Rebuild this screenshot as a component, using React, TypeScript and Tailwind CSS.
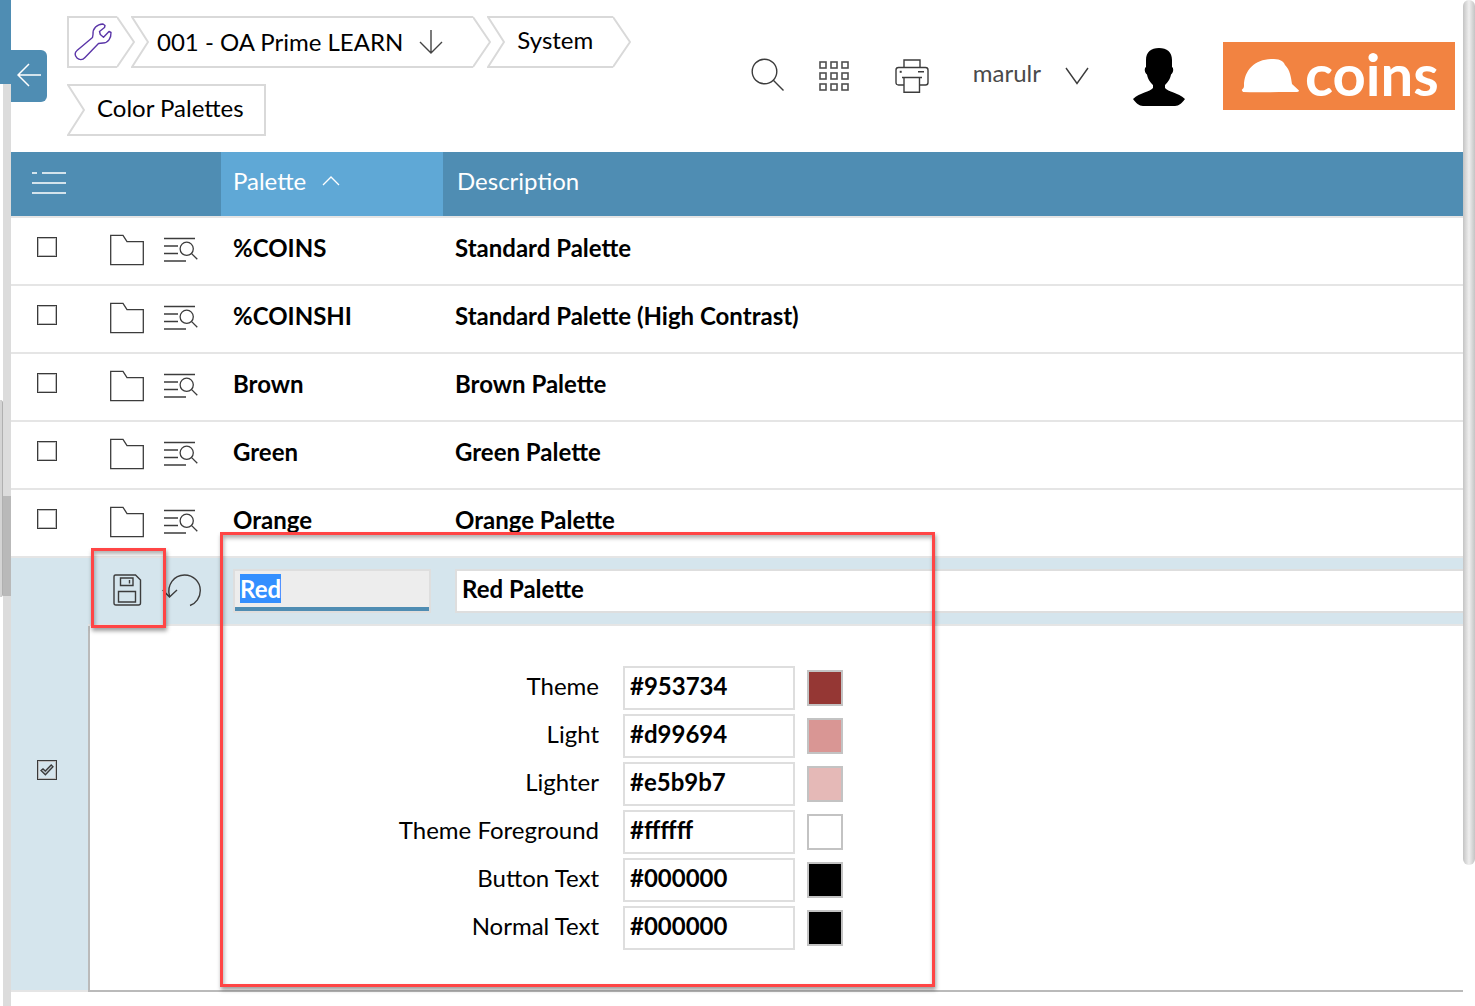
import { useEffect, useRef } from "react";
import type { ReactNode } from "react";

const rows = [
  { code: "%COINS", description: "Standard Palette" },
  { code: "%COINSHI", description: "Standard Palette (High Contrast)" },
  { code: "Brown", description: "Brown Palette" },
  { code: "Green", description: "Green Palette" },
  { code: "Orange", description: "Orange Palette" },
];

const fields = [
  { id: "theme", label: "Theme", value: "#953734", swatch: "bg-[#953734]" },
  { id: "light", label: "Light", value: "#d99694", swatch: "bg-[#d99694]" },
  { id: "lighter", label: "Lighter", value: "#e5b9b7", swatch: "bg-[#e5b9b7]" },
  { id: "foreground", label: "Theme Foreground", value: "#ffffff", swatch: "bg-white" },
  { id: "button-text", label: "Button Text", value: "#000000", swatch: "bg-black" },
  { id: "normal-text", label: "Normal Text", value: "#000000", swatch: "bg-black" },
];

function Crumb({ start, end, children }: { start: "flat" | "notch"; end: "flat" | "tip"; children: ReactNode }) {
  return (
    <li className="-mr-1 flex h-[52px]">
      {start === "notch" && (
        <svg className="h-[52px] w-[18px] shrink-0" viewBox="0 0 18 52" fill="none" stroke="#d9d9d9" strokeWidth="2" aria-hidden="true">
          <path d="M18 1H1L17 26L1 51H18" />
        </svg>
      )}
      <div className={`flex items-center border-y-2 border-[#d9d9d9] ${start === "flat" ? "border-l-2" : ""} ${end === "flat" ? "border-r-2" : ""}`}>
        {children}
      </div>
      {end === "tip" && (
        <svg className="h-[52px] w-[18px] shrink-0" viewBox="0 0 18 52" fill="none" stroke="#d9d9d9" strokeWidth="2" aria-hidden="true">
          <path d="M0 1L17 26L0 51" />
        </svg>
      )}
    </li>
  );
}

function FolderIcon() {
  return (
    <svg width="34" height="32" viewBox="0 0 34 32" fill="none" stroke="#3c3c3c" strokeWidth="1.3" aria-hidden="true">
      <path d="M.7 1.3H13L17 7.6H33.3V30.7H.7Z" />
    </svg>
  );
}

function ListSearchIcon() {
  return (
    <svg width="34" height="32" viewBox="0 0 34 32" fill="none" stroke="#3c3c3c" strokeWidth="1.3" aria-hidden="true">
      <path d="M0 4.5H31M0 12H14M0 19.5H14M0 27H22" />
      <circle cx="22.7" cy="14.8" r="6.6" />
      <path d="M27.4 19.4L33.3 25.3" />
    </svg>
  );
}

function RowCheckbox({ label, checked = false }: { label: string; checked?: boolean }) {
  return (
    <label className="ml-[26px] grid size-5 place-items-center">
      <input type="checkbox" aria-label={label} defaultChecked={checked} className="peer col-start-1 row-start-1 size-5 appearance-none border border-[#3a3a3a] shadow-[inset_0_0_0_1px_#bdbdbd]" />
      <svg className="pointer-events-none invisible col-start-1 row-start-1 peer-checked:visible" width="14" height="12" viewBox="0 0 14 12" fill="#b9c4ca" stroke="#3a3a3a" strokeWidth="1.3" aria-hidden="true">
        <path d="M1 6.5L3 4.8L5.3 7L11.2 1L13 2.8L5.4 10.8Z" />
      </svg>
    </label>
  );
}

function Header() {
  return (
    <header className="flex h-[152px] pr-2">
      <nav aria-label="Breadcrumb" className="flex-1 pt-4 pl-14">
        <ol className="flex flex-wrap gap-y-4">
          <Crumb start="flat" end="tip">
            <a href="#tools" aria-label="Tools" className="flex w-12 pl-1">
              <svg width="40" height="40" viewBox="0 0 40 40" fill="none" stroke="#5a35a8" strokeWidth="1.4" strokeLinejoin="round" aria-hidden="true">
                <path d="M20 12.5C19.500 6.500 24 2.200 30 2L32 3.500L31.500 5.500L26.500 9.500L27.300 12.500L30.500 15.200L36 9.500L38 10.500C38.300 16 35 21 30 21L25.500 21.500L12 35.500C9.500 38.500 6 38 4 36C1.500 33.500 1.500 30.500 4 28.500L19.500 15.500Z" />
              </svg>
            </a>
          </Crumb>
          <Crumb start="notch" end="tip">
            <a href="#company" className="pl-2">001 - OA Prime LEARN</a>
            <svg className="mr-[30px] ml-4" width="24" height="26" viewBox="0 0 24 26" fill="none" stroke="#444" strokeWidth="1.4" aria-hidden="true">
              <path d="M12 1V24M1 13L12 24L23 13" />
            </svg>
          </Crumb>
          <Crumb start="notch" end="tip">
            <a href="#system" className="pr-5 pb-1 pl-3">System</a>
          </Crumb>
          <Crumb start="notch" end="flat">
            <a href="#palettes" className="pr-5 pb-1 pl-3">Color Palettes</a>
          </Crumb>
        </ol>
      </nav>
      <div className="flex shrink-0 items-center">
        <button type="button" aria-label="Search" className="pb-0.5">
          <svg width="34" height="34" viewBox="0 0 34 34" fill="none" stroke="#3c3c3c" strokeWidth="1.4" aria-hidden="true">
            <circle cx="13.500" cy="13.500" r="12.300" />
            <path d="M22.300 22.300L32.500 32.500" />
          </svg>
        </button>
        <button type="button" aria-label="Applications" className="ml-[34px]">
          <svg width="30" height="30" viewBox="0 0 30 30" fill="none" stroke="#505050" strokeWidth="1.6" aria-hidden="true">
            {[1, 12, 23].map((y) => [1, 12, 23].map((x) => <rect key={`${x}-${y}`} x={x} y={y} width="6" height="6" />))}
          </svg>
        </button>
        <button type="button" aria-label="Print" className="ml-[46px]">
          <svg width="34" height="34" viewBox="0 0 34 34" fill="none" stroke="#3c3c3c" strokeWidth="1.400" aria-hidden="true">
            <path d="M9 8.500V1H25V8.500" />
            <path d="M9 26H3.500Q1 26 1 23.500V11Q1 8.500 3.500 8.500H30.500Q33 8.500 33 11V23.500Q33 26 30.500 26H25" />
            <path d="M7 18.500H27M9 18.500V33.300H24.500V18.500M23 12.700H29" />
            <rect x="4.700" y="11.800" width="2" height="2" fill="#3c3c3c" stroke="none" />
          </svg>
        </button>
        <button type="button" className="ml-11 flex items-center text-[#4a4a4a]">
          <span className="pb-1.5">marulr</span>
          <svg className="ml-6" width="24" height="18" viewBox="0 0 24 18" fill="none" stroke="#3c3c3c" strokeWidth="1.400" aria-hidden="true">
            <path d="M1 1L12 16.500L23 1" />
          </svg>
        </button>
        <svg className="mt-0.5 ml-[43px]" width="54" height="60" viewBox="0 0 54 60" role="img" aria-label="User">
          <path d="M27 1C35 1 40 5 40 13V20C42 21 41.500 26 39 27.500C38 33 35 36 33 38V41C36 45 46 45.500 53 52C50 56 47 59 43 59H11C7 59 4 56 1 52C8 45.500 18 45 21 41V38C19 36 16 33 15 27.500C12.500 26 12 21 14 20V13C14 5 19 1 27 1Z" />
        </svg>
        <a href="#home" aria-label="coins" className="ml-[37px] flex h-[68px] w-[232px] items-center bg-[#f28341] pl-[18px] text-white">
          <svg width="60" height="36" viewBox="0 0 60 36" fill="white" aria-hidden="true">
            <path d="M0.700 32C2 30.500 3 30 3 28C3 12 14 1.500 30 1C38 1 42 2 44 7C49 12 50 19 51 26L58 32.500Q58 34.500 54 34C38 33.500 20 35 2 34Z" />
          </svg>
          <span className="pb-1 pl-1 text-[58px] leading-[64px] font-bold">coins</span>
        </a>
      </div>
    </header>
  );
}

function EditRows() {
  const codeRef = useRef<HTMLInputElement>(null);
  useEffect(() => {
    codeRef.current?.focus();
    codeRef.current?.select();
  }, []);

  return (
    <>
      <tr className="h-[68px] bg-[#d5e5ed]">
        <td rowSpan={2} className="border-b-2 border-[#e5e5e5] pb-2">
          <RowCheckbox label="Select Red" checked />
        </td>
        <td className="border-b-2 border-[#e5e5e5] pb-0.5">
          <div className="flex items-center pl-6">
            <button type="button" aria-label="Save">
              <svg width="30" height="32" viewBox="0 0 30 32" fill="none" stroke="#3c3c3c" strokeWidth="1.400" aria-hidden="true">
                <path d="M3.500 1H23.500L28.500 6V29Q28.500 31 26.500 31H4Q2 31 2 29V3Q2 1 3.500 1Z" />
                <path d="M8.500 4H21V11.500H8.500ZM17.500 6V9.500M6.500 17.500H23.500V28H6.500Z" />
              </svg>
            </button>
            <button type="button" aria-label="Undo" className="ml-5">
              <svg width="40" height="34" viewBox="0 0 40 34" fill="none" stroke="#3c3c3c" strokeWidth="1.400" aria-hidden="true">
                <path d="M7.500 23C4.500 12 12 2 22.500 2C31.500 2 38.300 9 38.300 17.500C38.300 24.500 34 30.500 28 32.500M.7 17L7.500 24L15 17" />
              </svg>
            </button>
          </div>
        </td>
        <td className="border-b-2 border-[#e5e5e5] px-3">
          <input ref={codeRef} aria-label="Palette" defaultValue="Red" className="block h-11 w-full border-2 border-[#dedede] bg-[#ededed] px-[5px] pb-1.5 font-bold shadow-[inset_0_-4px_0_#4f8db3] outline-none selection:bg-[#338fff] selection:text-white" />
        </td>
        <td className="border-b-2 border-[#e5e5e5] pl-3">
          <input aria-label="Description" defaultValue="Red Palette" className="block h-11 w-full border-2 border-r-0 border-[#dedede] bg-white px-[5px] pb-1.5 font-bold outline-none" />
        </td>
      </tr>
      <tr>
        <td colSpan={3} className="border-b-2 border-l-2 border-[#bababa] py-10">
          <div className="flex flex-col gap-1">
            {fields.map((f) => (
              <div key={f.id} className="flex items-center">
                <label htmlFor={f.id} className="w-[509px] pb-1 text-right">{f.label}</label>
                <input id={f.id} defaultValue={f.value} className="ml-6 h-11 w-[172px] border-2 border-[#dedede] px-[5px] pb-1.5 font-bold outline-none" />
                <button type="button" aria-label={`Pick ${f.label} colour`} className={`ml-3 size-9 border-2 border-[#c3c3c3] ${f.swatch}`} />
              </div>
            ))}
          </div>
        </td>
      </tr>
    </>
  );
}

export default function App() {
  return (
    <div className="relative flex min-h-screen overflow-hidden bg-white font-['Lato',sans-serif] text-2xl leading-8 text-black">
      <div className="flex w-[11px] shrink-0 flex-col">
        <div className="h-[84px] bg-[#4f8db3]" />
        <div className="ml-[3px] flex-1 bg-[#dcdcdc] pt-[412px]">
          <div className="h-[100px] bg-[#b9b9b9]" />
        </div>
      </div>
      <div className="absolute top-[400px] left-0 h-[197px] w-[3px] rounded-r-sm border-r border-[#b0b0b0] bg-[#d4d4d4]" />
      <button type="button" aria-label="Back" className="absolute top-[50px] left-[11px] flex h-[52px] w-9 items-center rounded-r-md bg-[#4f8db3] pb-0.5 pl-1.5">
        <svg width="24" height="24" viewBox="0 0 24 24" fill="none" stroke="white" strokeWidth="1.500" aria-hidden="true">
          <path d="M24 12H1M12 1L1 12L12 23" />
        </svg>
      </button>

      <main className="min-w-0 flex-1">
        <Header />
        <table className="w-full table-fixed border-separate border-spacing-0 text-left">
          <colgroup>
            <col className="w-[77px]" />
            <col className="w-[133px]" />
            <col className="w-[222px]" />
            <col />
          </colgroup>
          <thead>
            <tr className="h-[66px] bg-[#4f8db3] text-white">
              <th className="border-b-2 border-[#e5e5e5] pb-0.5">
                <button type="button" aria-label="List options" className="ml-[21px] block">
                  <svg width="34" height="22" viewBox="0 0 34 22" fill="none" stroke="white" strokeWidth="1.500" aria-hidden="true">
                    <path d="M0 1H5M10 1H34M0 11H34M0 21H34" />
                  </svg>
                </button>
              </th>
              <th className="border-b-2 border-[#e5e5e5]" />
              <th aria-sort="ascending" className="border-b-2 border-[#e5e5e5] bg-[#5fa8d6] px-3 pb-1.5 font-normal">
                <button type="button" className="flex items-center">
                  Palette
                  <svg className="ml-4" width="18" height="10" viewBox="0 0 18 10" fill="none" stroke="white" strokeWidth="1.300" aria-hidden="true">
                    <path d="M1 9L9 1L17 9" />
                  </svg>
                </button>
              </th>
              <th className="border-b-2 border-[#e5e5e5] px-3.5 pb-1.5 font-normal">Description</th>
            </tr>
          </thead>
          <tbody>
            {rows.map((row) => (
              <tr key={row.code} className="h-[68px] font-bold">
                <td className="border-b-2 border-[#e5e5e5] pb-2">
                  <RowCheckbox label={`Select ${row.code}`} />
                </td>
                <td className="border-b-2 border-[#e5e5e5] pb-0.5">
                  <div className="flex items-center gap-5 pl-[22px]">
                    <button type="button" aria-label={`Open ${row.code}`}><FolderIcon /></button>
                    <button type="button" aria-label={`View ${row.code}`}><ListSearchIcon /></button>
                  </div>
                </td>
                <td className="border-b-2 border-[#e5e5e5] px-3 pb-1.5">{row.code}</td>
                <td className="border-b-2 border-[#e5e5e5] px-3 pb-1.5">{row.description}</td>
              </tr>
            ))}
            <EditRows />
          </tbody>
        </table>
      </main>

      <div className="w-3 shrink-0">
        <div className="h-[865px] rounded-full bg-linear-to-r from-[#c4c4c4] via-[#efefef] to-[#c4c4c4]" />
      </div>

      <div className="pointer-events-none absolute top-[548px] left-[91px] h-20 w-[75px] border-[3px] border-[#ff4545] shadow-[1px_3px_4px_#00000060,inset_1px_3px_4px_#00000050]" />
      <div className="pointer-events-none absolute top-[532px] left-[220px] h-[455px] w-[715px] border-[3px] border-[#ff4545] shadow-[1px_3px_4px_#00000060,inset_1px_3px_4px_#00000050]" />
    </div>
  );
}
